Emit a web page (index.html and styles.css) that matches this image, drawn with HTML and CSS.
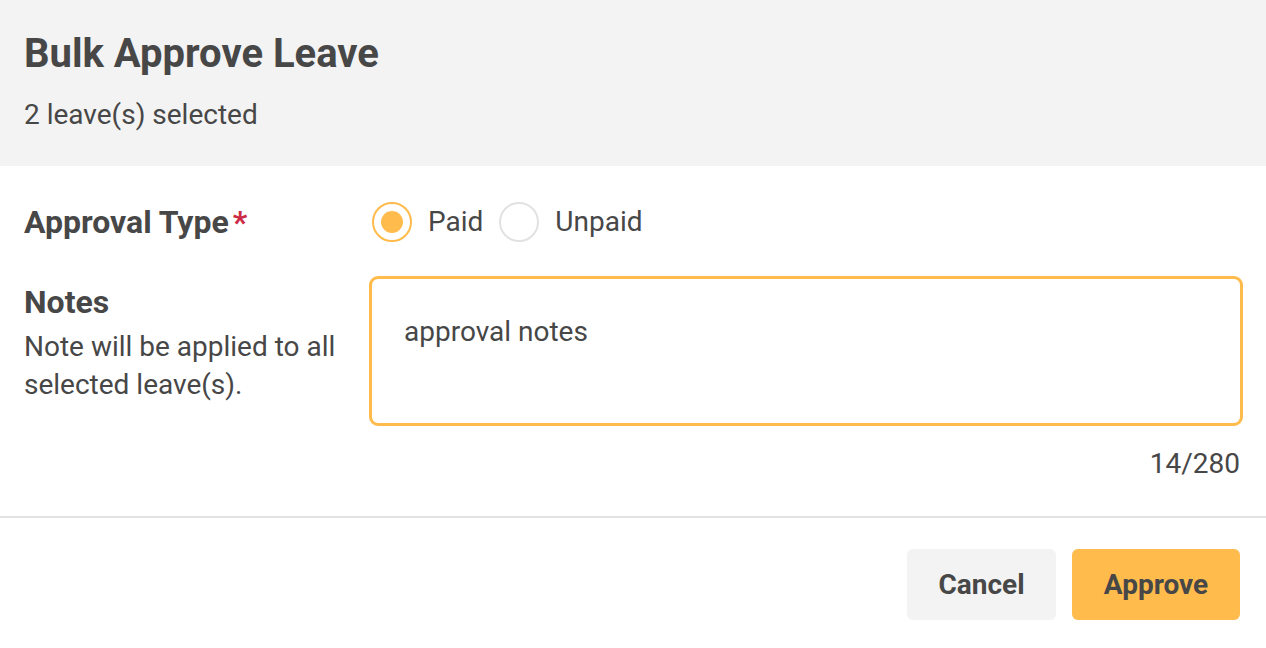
FILE: index.html
```html
<!DOCTYPE html>
<html>
<head>
<meta charset="utf-8">
<link rel="stylesheet" href="styles.css">
</head>
<body>
<div class="dialog">
  <header class="head">
    <h1 class="title">Bulk Approve Leave</h1>
    <p class="sub">2 leave(s) selected</p>
  </header>
  <section class="body">
    <div class="row row-type">
      <div class="label-col"><span class="label">Approval Type</span><span class="req">*</span></div>
      <div class="radios">
        <label class="opt"><span class="radio checked"><span class="dot"></span></span><span class="opt-text">Paid</span></label>
        <label class="opt"><span class="radio"></span><span class="opt-text">Unpaid</span></label>
      </div>
    </div>
    <div class="row row-notes">
      <div class="label-col notes-col">
        <div class="label">Notes</div>
        <div class="desc">Note will be applied to all selected leave(s).</div>
      </div>
      <div class="field">
        <div class="textarea">approval notes</div>
        <div class="counter">14/280</div>
      </div>
    </div>
  </section>
  <footer class="foot">
    <button class="btn btn-cancel">Cancel</button>
    <button class="btn btn-approve">Approve</button>
  </footer>
</div>
</body>
</html>
```

FILE: styles.css
```css
* { box-sizing: border-box; }
html, body { margin: 0; padding: 0; background: #fff; }
body {
  font-family: Roboto, "Liberation Sans", Arial, sans-serif;
  color: #474747;
  width: 1266px;
  height: 648px;
  overflow: hidden;
}
.head {
  background: #f3f3f3;
  padding: 30px 24px 0;
  height: 166px;
}
.title {
  margin: 0;
  font-size: 40px;
  line-height: 48px;
  font-weight: 700;
}
.sub {
  margin: 19px 0 0;
  font-size: 28px;
  line-height: 36px;
  font-weight: 400;
}
.body {
  padding: 36px 23px 0 24px;
}
.row { display: flex; }
.label-col { width: 345px; flex: none; }
.row-type { align-items: center; height: 40px; }
.label {
  font-size: 32px;
  font-weight: 700;
  line-height: 40px;
}
.req {
  color: #cc2a45;
  font-size: 32px;
  font-weight: 700;
  margin-left: 4px;
}
.radios { display: flex; align-items: center; padding-left: 3px; }
.opt { display: flex; align-items: center; margin-right: 16px; cursor: pointer; }
.radio {
  width: 40px; height: 40px;
  border-radius: 50%;
  border: 2px solid #e2e2e2;
  display: flex; align-items: center; justify-content: center;
  background: #fff;
}
.radio.checked { border-color: #ffbb4c; }
.dot { width: 22px; height: 22px; border-radius: 50%; background: #ffbb4c; }
.opt-text { font-size: 28px; margin-left: 16px; line-height: 40px; }
.row-notes { margin-top: 34px; }
.notes-col { padding-top: 6px; }
.desc {
  font-size: 28px;
  line-height: 38px;
  margin-top: 6px;
  width: 330px;
}
.field { flex: 1; }
.textarea {
  height: 150px;
  border: 3px solid #ffbb4c;
  border-radius: 9px;
  padding: 35px 32px 0;
  font-size: 28px;
  line-height: 36px;
}
.counter {
  text-align: right;
  font-size: 28px;
  line-height: 36px;
  margin-top: 20px;
  padding-right: 3px;
}
.foot {
  margin-top: 34px;
  border-top: 2px solid #e2e2e2;
  padding: 31px 26px 0 0;
  display: flex;
  justify-content: flex-end;
  gap: 16px;
}
.btn {
  font-family: Roboto, "Liberation Sans", Arial, sans-serif;
  height: 71px;
  border: 0;
  border-radius: 6px;
  font-size: 28px;
  font-weight: 700;
  color: #474747;
  padding: 0;
}
.btn-cancel { background: #f3f3f3; width: 149px; }
.btn-approve { background: #ffbb4c; width: 168px; }
```
